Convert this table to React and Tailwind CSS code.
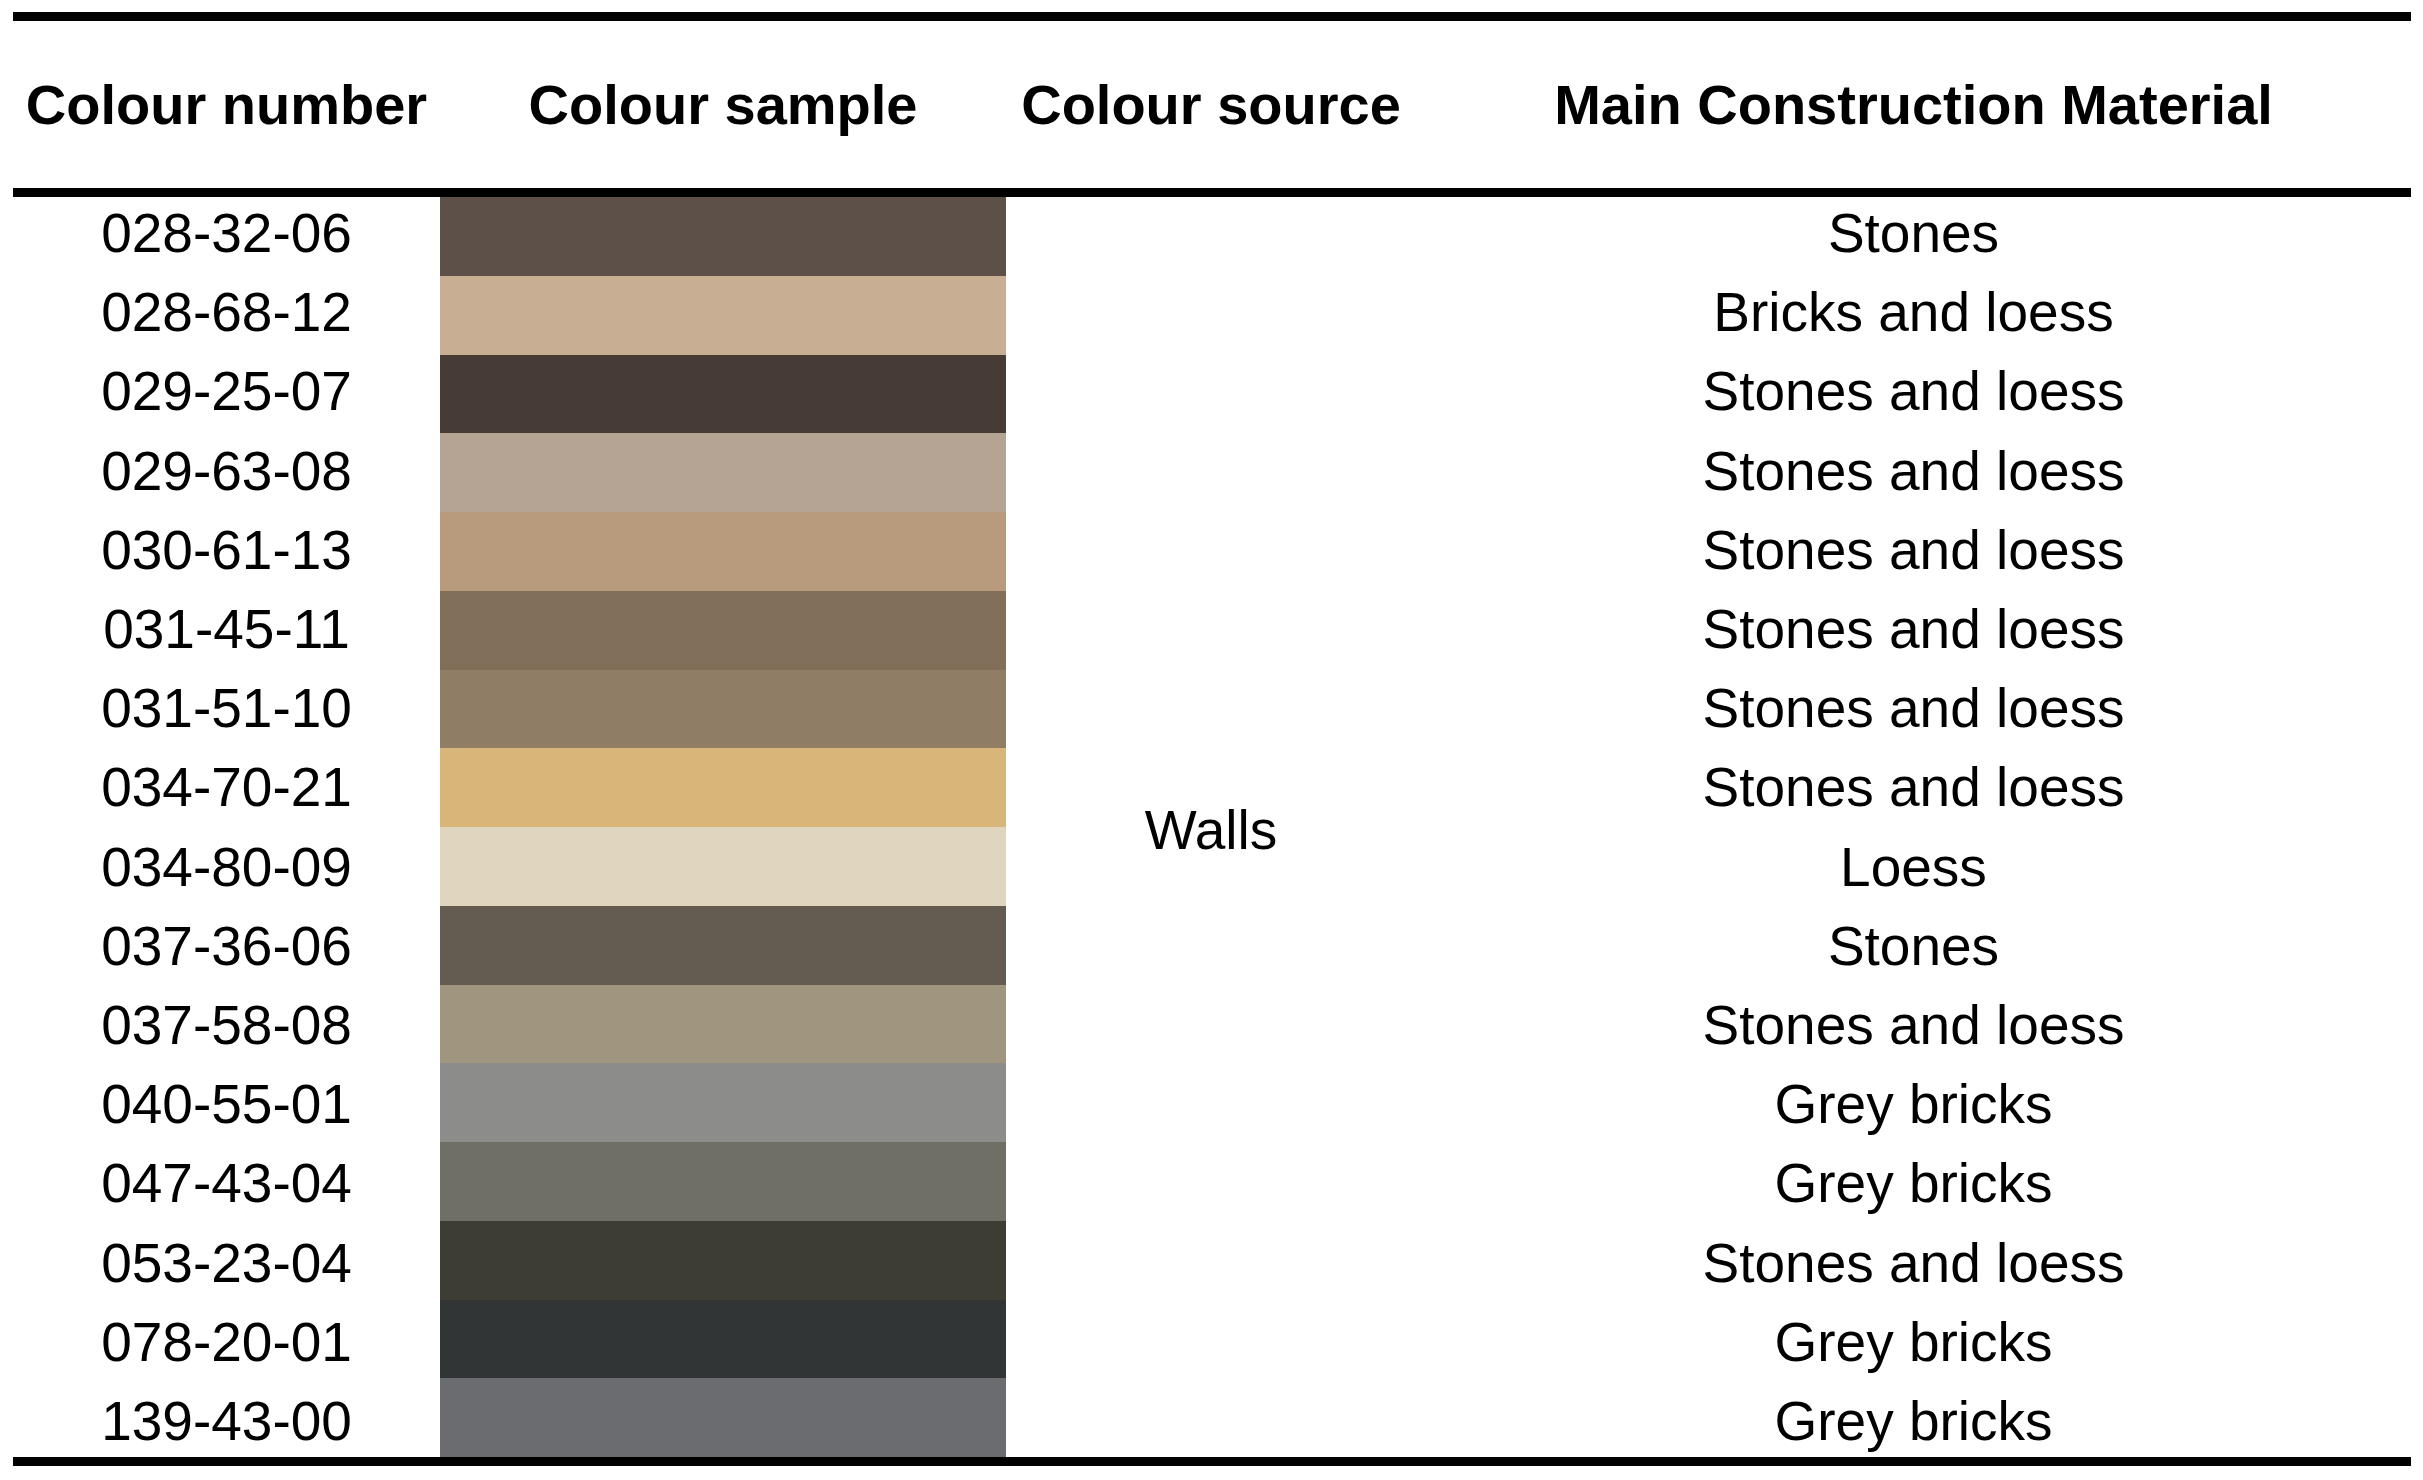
const rows = [
  { code: '028-32-06', color: '#5c5048', material: 'Stones' },
  { code: '028-68-12', color: '#c8ae93', material: 'Bricks and loess' },
  { code: '029-25-07', color: '#473b36', material: 'Stones and loess' },
  { code: '029-63-08', color: '#b5a394', material: 'Stones and loess' },
  { code: '030-61-13', color: '#b89b7d', material: 'Stones and loess' },
  { code: '031-45-11', color: '#826f59', material: 'Stones and loess' },
  { code: '031-51-10', color: '#8f7d66', material: 'Stones and loess' },
  { code: '034-70-21', color: '#d8b67a', material: 'Stones and loess' },
  { code: '034-80-09', color: '#e0d5bf', material: 'Loess' },
  { code: '037-36-06', color: '#655c51', material: 'Stones' },
  { code: '037-58-08', color: '#a09680', material: 'Stones and loess' },
  { code: '040-55-01', color: '#8c8c8a', material: 'Grey bricks' },
  { code: '047-43-04', color: '#6f6f66', material: 'Grey bricks' },
  { code: '053-23-04', color: '#3d3d34', material: 'Stones and loess' },
  { code: '078-20-01', color: '#323536', material: 'Grey bricks' },
  { code: '139-43-00', color: '#6b6c70', material: 'Grey bricks' },
];

const headers = ['Colour number', 'Colour sample', 'Colour source', 'Main Construction Material'];

const App = () => {
  return (
    <div
      className="w-[2423px] h-[1480px] bg-white text-black pt-[12px] pl-[13px]"
      style={{ fontFamily: '"Liberation Sans", Arial, sans-serif' }}
    >
      <div className="w-[2398px]">
        {/* top rule */}
        <div className="h-[9px] bg-black" />

        {/* header row */}
        <div className="grid grid-cols-[427px_566px_410px_995px] h-[167px]">
          {headers.map((h) => (
            <div key={h} className="flex items-center justify-center text-[56px] font-bold leading-none">
              {h}
            </div>
          ))}
        </div>

        <div className="h-[9px] bg-black" />

        {/* body: each column stacks its own rows */}
        <div className="grid grid-cols-[427px_566px_410px_995px] h-[1260px]">
          <div className="flex flex-col">
            {rows.map((r) => (
              <div key={r.code} className="h-[79.2px] shrink-0 flex items-center justify-center text-[55px] leading-none pb-[6px]">
                {r.code}
              </div>
            ))}
          </div>
          <div className="flex flex-col">
            {rows.map((r) => (
              <div key={r.code} className="h-[78.75px] shrink-0" style={{ backgroundColor: r.color }} />
            ))}
          </div>
          <div className="flex items-center justify-center text-[55px] leading-none">
            Walls
          </div>
          <div className="flex flex-col">
            {rows.map((r) => (
              <div key={r.code} className="h-[79.2px] shrink-0 flex items-center justify-center text-[55px] leading-none pb-[6px]">
                {r.material}
              </div>
            ))}
          </div>
        </div>

        {/* bottom rule */}
        <div className="h-[9px] bg-black" />
      </div>
    </div>
  );
};

export default App;
